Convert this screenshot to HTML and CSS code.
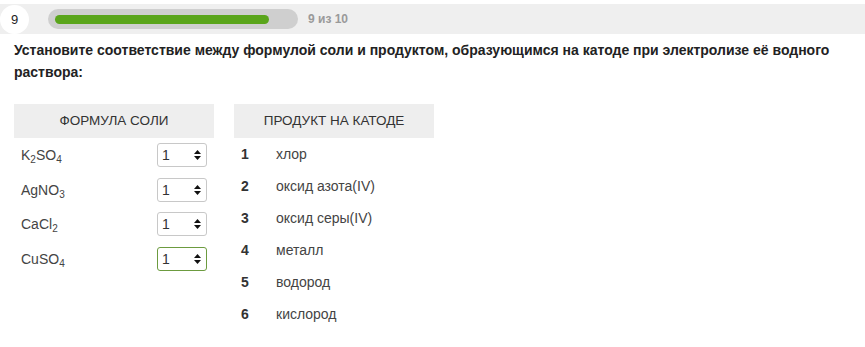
FILE: index.html
```html
<!DOCTYPE html>
<html lang="ru">
<head>
  <meta charset="UTF-8">
  <title>Задание 9</title>
  <link rel="stylesheet" href="styles.css">
</head>
<body>
  <div class="topbar">
    <div class="step">9</div>
    <div class="track"><div class="fill"></div></div>
    <div class="count">9 из 10</div>
  </div>

  <p class="question">Установите соответствие между формулой соли и продуктом, образующимся на катоде при электролизе её водного раствора:</p>

  <div class="match">
    <div class="col">
      <div class="head">ФОРМУЛА СОЛИ</div>
      <div class="salt">
        <span>K<sub>2</sub>SO<sub>4</sub></span>
        <div class="pick"><select><option>1</option></select><svg class="arrows" width="7" height="10" viewBox="0 0 7 10"><path d="M3.5 0L7 4H0z M3.5 10L7 6H0z" fill="#111"/></svg></div>
      </div>
      <div class="salt">
        <span>AgNO<sub>3</sub></span>
        <div class="pick"><select><option>1</option></select><svg class="arrows" width="7" height="10" viewBox="0 0 7 10"><path d="M3.5 0L7 4H0z M3.5 10L7 6H0z" fill="#111"/></svg></div>
      </div>
      <div class="salt">
        <span>CaCl<sub>2</sub></span>
        <div class="pick"><select><option>1</option></select><svg class="arrows" width="7" height="10" viewBox="0 0 7 10"><path d="M3.5 0L7 4H0z M3.5 10L7 6H0z" fill="#111"/></svg></div>
      </div>
      <div class="salt">
        <span>CuSO<sub>4</sub></span>
        <div class="pick active"><select><option>1</option></select><svg class="arrows" width="7" height="10" viewBox="0 0 7 10"><path d="M3.5 0L7 4H0z M3.5 10L7 6H0z" fill="#111"/></svg></div>
      </div>
    </div>

    <div class="col">
      <div class="head">ПРОДУКТ НА КАТОДЕ</div>
      <div class="product"><b>1</b><span>хлор</span></div>
      <div class="product"><b>2</b><span>оксид азота(IV)</span></div>
      <div class="product"><b>3</b><span>оксид серы(IV)</span></div>
      <div class="product"><b>4</b><span>металл</span></div>
      <div class="product"><b>5</b><span>водород</span></div>
      <div class="product"><b>6</b><span>кислород</span></div>
    </div>
  </div>
</body>
</html>
```

FILE: styles.css
```css
body {
  margin: 0;
  font-family: 'Liberation Sans', Arial, sans-serif;
  color: #333;
  background: #fff;
}
.topbar {
  margin-top: 4px;
  height: 30px;
  background: #efefef;
  display: flex;
  align-items: center;
}
.step {
  width: 29px;
  height: 29px;
  border-radius: 50%;
  background: #fff;
  text-align: center;
  line-height: 29px;
  font-size: 13px;
  color: #222;
}
.track {
  margin-left: 19px;
  width: 236px;
  height: 20px;
  padding: 0 7px;
  background: #cfcfcf;
  border-radius: 10px;
  display: flex;
  align-items: center;
}
.fill {
  width: 214px;
  height: 9px;
  background: #5aa51b;
  border-radius: 5px;
}
.count {
  margin-left: 10px;
  font-size: 12px;
  font-weight: bold;
  color: #9a9a9a;
}
.question {
  margin: 5px 0 0;
  padding: 0 14px;
  font-size: 14px;
  font-weight: bold;
  line-height: 22px;
  color: #222;
}
.match {
  display: flex;
  gap: 20px;
  margin: 21px 0 0 14px;
}
.col {
  width: 200px;
}
.head {
  height: 34px;
  line-height: 34px;
  background: #eee;
  text-align: center;
  font-size: 13.5px;
  color: #333;
}
.salt {
  height: 34.5px;
  padding: 0 7px;
  display: flex;
  align-items: center;
  justify-content: space-between;
  font-size: 14px;
  color: #444;
}
.salt:first-of-type {
  margin-top: 1px;
}
sub {
  font-size: 10px;
  vertical-align: -3px;
  line-height: 0;
}
.pick {
  position: relative;
  width: 50px;
  height: 24px;
}
.pick select {
  appearance: none;
  -webkit-appearance: none;
  width: 50px;
  height: 24px;
  padding: 0 0 0 4px;
  border: 1px solid #c8c8c8;
  border-radius: 3px;
  background: #fff;
  font-family: 'Liberation Sans', Arial, sans-serif;
  font-size: 14px;
  color: #333;
}
.pick.active select {
  border-color: #6c9b3f;
}
.arrows {
  position: absolute;
  right: 6px;
  top: 7px;
  pointer-events: none;
}
.product {
  height: 32px;
  padding-left: 7px;
  display: flex;
  align-items: center;
  font-size: 14px;
  color: #444;
}
.product b {
  width: 35px;
  color: #333;
}
```
